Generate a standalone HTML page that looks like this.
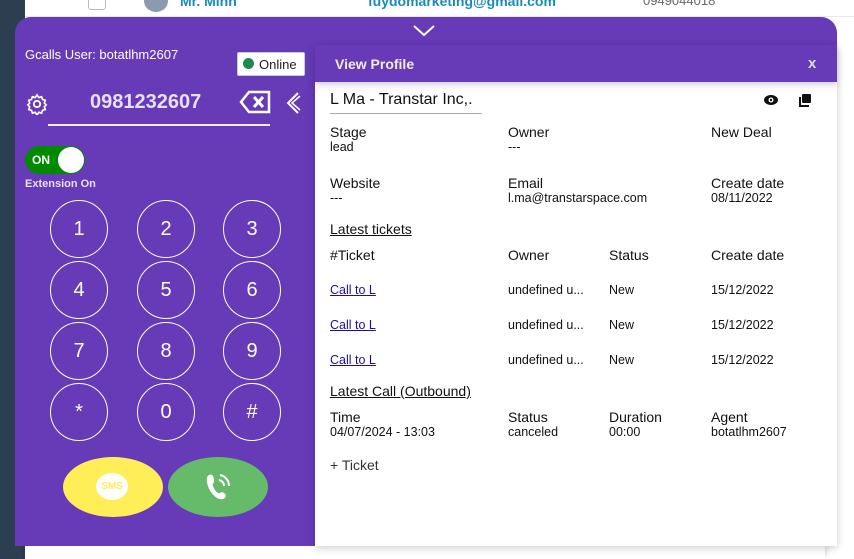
<!DOCTYPE html>
<html><head><style>
*{box-sizing:border-box;margin:0;padding:0}
body{width:854px;height:559px;position:relative;overflow:hidden;background:#fff;font-family:"Liberation Sans",sans-serif;}
.abs{position:absolute}
.k{position:absolute;width:58px;height:58px;border:1.5px solid #fff;border-radius:50%;color:#fff;font-size:20px;display:flex;align-items:center;justify-content:center}
.lbl{position:absolute;font-size:14px;color:#111}
.val{position:absolute;font-size:12.5px;color:#111}
a{color:#1a0dab;font-size:12.5px;position:absolute;text-decoration:underline}
</style></head><body>
<div class="abs" style="left:0;top:0;width:25px;height:559px;background:#2c3e50"></div>
<div class="abs" style="left:25px;top:0;width:829px;height:17px;background:#fff;border-bottom:1px solid #e5e9ef"></div>
<div class="abs" style="left:88px;top:-8px;width:18px;height:18px;border:1.5px solid #bbb;border-radius:3px"></div>
<div class="abs" style="left:144px;top:-10px;width:24px;height:22px;border-radius:50%;background:#8a9bb0"></div>
<div class="abs" style="left:180px;top:-7px;color:#1a8bb5;font-weight:bold;font-size:14px">Mr. Minh</div>
<div class="abs" style="left:368px;top:-7px;color:#1a8bb5;font-weight:bold;font-size:14px">fuydomarketing@gmail.com</div>
<div class="abs" style="left:643px;top:-7px;color:#666;font-size:13px">0949044018</div>
<div class="abs" style="left:25px;top:546px;width:800px;height:13px;background:#fff;box-shadow:0 -2px 6px rgba(0,0,0,.2)"></div>
<div class="abs" style="left:15px;top:17px;width:822px;height:529px;background:#673ab7;border-radius:16px 16px 0 0"></div>
<svg class="abs" style="left:412px;top:24px" width="24" height="14"><path d="M2 2 L12 11 L22 2" stroke="#fff" stroke-width="2" fill="none"/></svg>
<div class="abs" style="left:25px;top:47px;color:#fff;font-size:13px">Gcalls User: botatlhm2607</div>
<div class="abs" style="left:237px;top:52px;width:68px;height:24px;background:#fff;border:1px solid #ccc;border-radius:2px;font-size:13px;color:#222;padding:4px 0 0 21px">Online</div>
<div class="abs" style="left:243px;top:58px;width:11px;height:11px;border-radius:50%;background:#1e8a4c"></div>
<svg class="abs" style="left:26px;top:93px" width="22" height="22" viewBox="0 0 24 24"><circle cx="12" cy="12" r="3.5" stroke="#fff" stroke-width="2" fill="none"/><path d="M12 2l2 3 3-1 1 3 3 1-1 3 2 2-2 2 1 3-3 1-1 3-3-1-2 3-2-3-3 1-1-3-3-1 1-3-2-2 2-2-1-3 3-1 1-3 3 1z" stroke="#fff" stroke-width="1.8" fill="none"/></svg>
<div class="abs" style="left:90px;top:91px;color:#e8e0f4;font-size:20px;font-weight:bold">0981232607</div>
<div class="abs" style="left:48px;top:124px;width:222px;height:2px;background:#eee"></div>
<svg class="abs" style="left:239px;top:90px" width="32" height="24"><path d="M10 2H30V22H10L2 12Z" stroke="#fff" stroke-width="2.5" fill="none"/><path d="M15 7L24 17M24 7L15 17" stroke="#fff" stroke-width="3"/></svg>
<svg class="abs" style="left:284px;top:91px" width="18" height="24"><path d="M14 2L4 12L14 22" stroke="#fff" stroke-width="2" fill="none"/><path d="M16 5L8 12L16 19" stroke="#fff" stroke-width="1.5" fill="none"/></svg>
<div class="abs" style="left:25px;top:146px;width:60px;height:28px;background:#008a00;border-radius:14px"></div>
<div class="abs" style="left:32px;top:153px;color:#fff;font-size:12px;font-weight:bold">ON</div>
<div class="abs" style="left:58px;top:147px;width:26px;height:26px;background:#fff;border-radius:50%"></div>
<div class="abs" style="left:25px;top:178px;color:#e8e0f4;font-size:11px;font-weight:bold">Extension On</div>
<div class="k" style="left:50px;top:200px">1</div><div class="k" style="left:137px;top:200px">2</div><div class="k" style="left:223px;top:200px">3</div>
<div class="k" style="left:50px;top:261px">4</div><div class="k" style="left:137px;top:261px">5</div><div class="k" style="left:223px;top:261px">6</div>
<div class="k" style="left:50px;top:322px">7</div><div class="k" style="left:137px;top:322px">8</div><div class="k" style="left:223px;top:322px">9</div>
<div class="k" style="left:50px;top:383px">*</div><div class="k" style="left:137px;top:383px">0</div><div class="k" style="left:223px;top:383px">#</div>
<div class="abs" style="left:63px;top:457px;width:100px;height:60px;background:#ffee58;border-radius:50%/50%"></div>
<div class="abs" style="left:96px;top:473px;width:32px;height:27px;background:#fff;border-radius:50%;color:#ffee58;font-size:10px;font-weight:bold;text-align:center;line-height:27px">SMS</div>
<div class="abs" style="left:168px;top:457px;width:100px;height:60px;background:#66bb6a;border-radius:50%/50%"></div>
<svg class="abs" style="left:204px;top:472px" width="28" height="30" viewBox="0 0 28 30"><path d="M5 3c3-1 4 0 5 4s-2 4-1 7 3 6 5 7 3-2 6 0 2 5-1 6-8-1-12-7-6-15-2-17z" fill="#fff"/><path d="M15 8a6 6 0 0 1 5 6M16 3a11 11 0 0 1 9 11" stroke="#fff" stroke-width="2" fill="none"/></svg>
<div class="abs" style="left:315px;top:45px;width:522px;height:501px;background:#fff;box-shadow:0 2px 8px rgba(0,0,0,.2)"></div>
<div class="abs" style="left:315px;top:45px;width:522px;height:37px;background:#673ab7;box-shadow:0 3px 6px rgba(100,60,180,.25)"></div>
<div class="abs" style="left:335px;top:56px;color:#eee;font-size:14px;font-weight:bold">View Profile</div>
<div class="abs" style="left:808px;top:55px;color:#ddd;font-size:15px;font-weight:bold">x</div>
<div class="abs" style="left:330px;top:91px;font-size:16px;color:#111">L Ma - Transtar Inc,.</div>
<div class="abs" style="left:330px;top:113px;width:152px;height:1px;background:#aaa"></div>
<svg class="abs" style="left:763px;top:94px" width="16" height="12"><ellipse cx="8" cy="6" rx="7" ry="5" fill="#111"/><circle cx="8" cy="6" r="2.5" fill="#fff"/><circle cx="8" cy="6" r="1.2" fill="#111"/></svg>
<svg class="abs" style="left:798px;top:93px" width="14" height="14"><rect x="4" y="1" width="9" height="9" rx="1" fill="#111"/><path d="M2 4v9h9" stroke="#111" stroke-width="2" fill="none"/></svg>
<div class="lbl" style="left:330px;top:124px">Stage</div><div class="val" style="left:330px;top:140px">lead</div>
<div class="lbl" style="left:508px;top:124px">Owner</div><div class="val" style="left:508px;top:140px">---</div>
<div class="lbl" style="left:711px;top:124px">New Deal</div>
<div class="lbl" style="left:330px;top:175px">Website</div><div class="val" style="left:330px;top:191px">---</div>
<div class="lbl" style="left:508px;top:175px">Email</div><div class="val" style="left:508px;top:191px">l.ma@transtarspace.com</div>
<div class="lbl" style="left:711px;top:175px">Create date</div><div class="val" style="left:711px;top:191px">08/11/2022</div>
<div class="lbl" style="left:330px;top:221px;text-decoration:underline">Latest tickets</div>
<div class="lbl" style="left:330px;top:247px">#Ticket</div><div class="lbl" style="left:508px;top:247px">Owner</div><div class="lbl" style="left:609px;top:247px">Status</div><div class="lbl" style="left:711px;top:247px">Create date</div>
<a style="left:330px;top:283px">Call to L</a><div class="val" style="left:508px;top:283px">undefined u...</div><div class="val" style="left:609px;top:283px">New</div><div class="val" style="left:711px;top:283px">15/12/2022</div>
<a style="left:330px;top:318px">Call to L</a><div class="val" style="left:508px;top:318px">undefined u...</div><div class="val" style="left:609px;top:318px">New</div><div class="val" style="left:711px;top:318px">15/12/2022</div>
<a style="left:330px;top:353px">Call to L</a><div class="val" style="left:508px;top:353px">undefined u...</div><div class="val" style="left:609px;top:353px">New</div><div class="val" style="left:711px;top:353px">15/12/2022</div>
<div class="lbl" style="left:330px;top:383px;text-decoration:underline">Latest Call (Outbound)</div>
<div class="lbl" style="left:330px;top:409px">Time</div><div class="val" style="left:330px;top:425px">04/07/2024 - 13:03</div>
<div class="lbl" style="left:508px;top:409px">Status</div><div class="val" style="left:508px;top:425px">canceled</div>
<div class="lbl" style="left:609px;top:409px">Duration</div><div class="val" style="left:609px;top:425px">00:00</div>
<div class="lbl" style="left:711px;top:409px">Agent</div><div class="val" style="left:711px;top:425px">botatlhm2607</div>
<div class="abs" style="left:330px;top:457px;font-size:14px;color:#333">+ Ticket</div>
</body></html>
